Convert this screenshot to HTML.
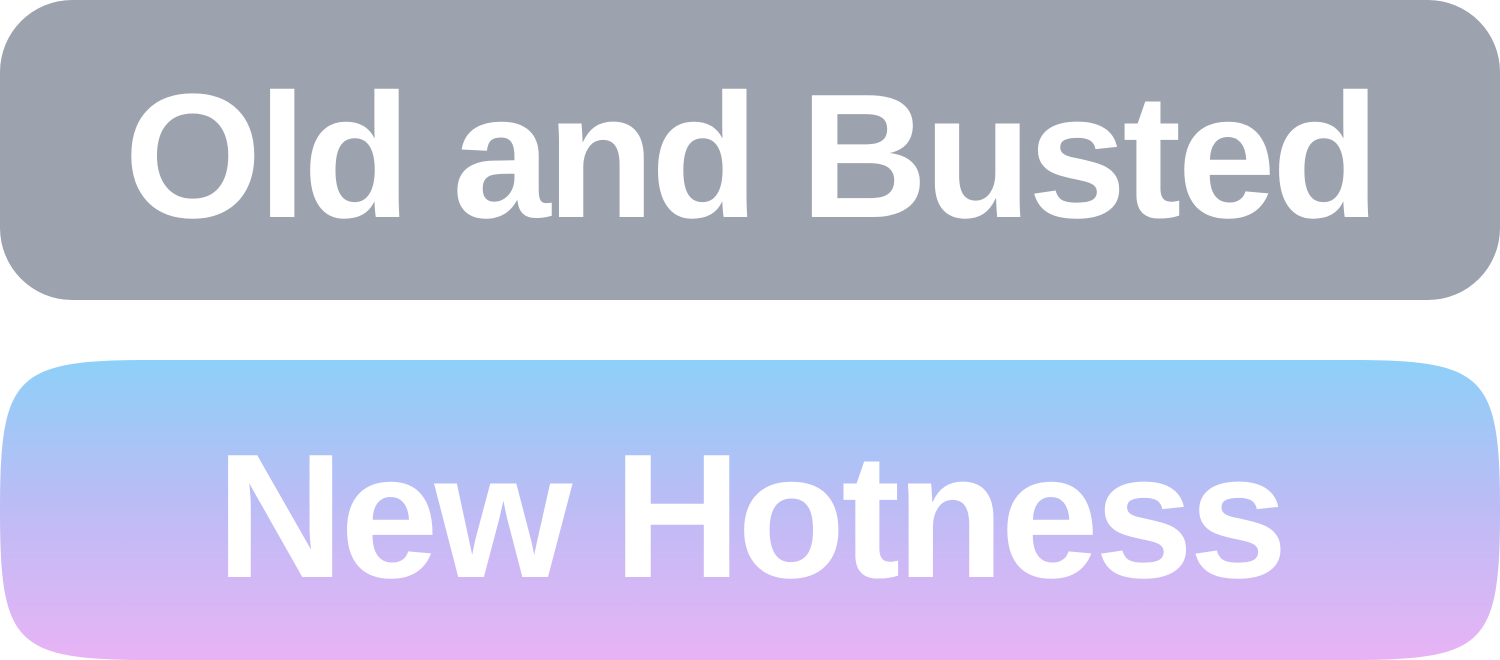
<!DOCTYPE html>
<html><head><style>
html,body{margin:0;padding:0;width:1500px;height:660px;background:#fff;overflow:hidden}
.b{position:absolute;left:0;width:1500px;height:300px;display:flex;align-items:center;justify-content:center;color:#fff;font-family:"Liberation Sans",sans-serif;font-weight:bold;font-size:177px;letter-spacing:-4px}
.t{top:0;background:#9ca3af;border-radius:72px}
.n{top:360px}
.n svg{position:absolute;left:0;top:0}
span{position:relative;top:6px}
</style></head><body>
<div class="b t"><span>Old and Busted</span></div>
<div class="b n"><svg width="1500" height="300"><defs><linearGradient id="g" x1="0" y1="0" x2="0" y2="1"><stop offset="0" stop-color="#8dd0f8"/><stop offset=".45" stop-color="#b9bdf5"/><stop offset="1" stop-color="#e8b3f5"/></linearGradient></defs><path d="M0,150 C0,15 15,0 150,0 L1350,0 C1485,0 1500,15 1500,150 C1500,285 1485,300 1350,300 L150,300 C15,300 0,285 0,150Z" fill="url(#g)"/></svg><span>New Hotness</span></div>
</body></html>
